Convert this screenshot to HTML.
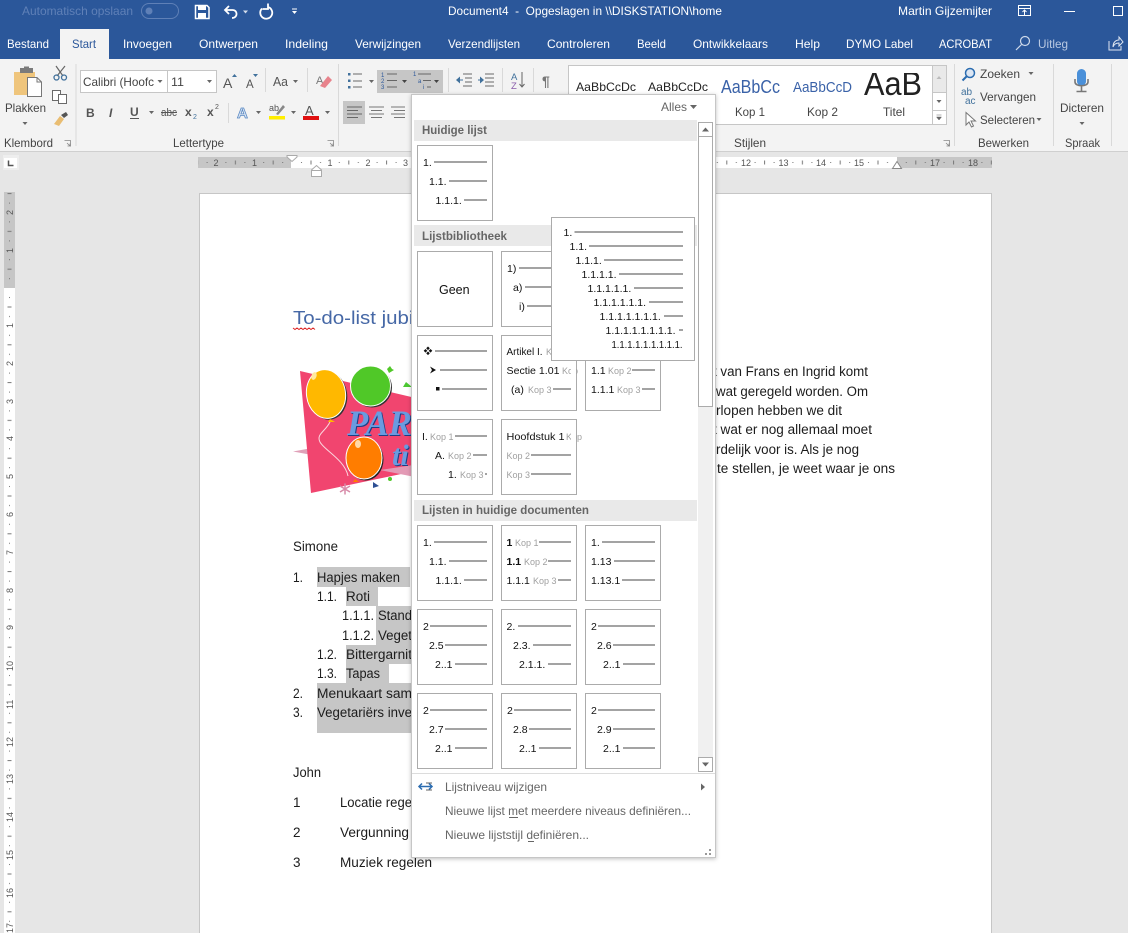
<!DOCTYPE html>
<html lang="nl"><head><meta charset="utf-8"><title>Document4</title>
<style>
html,body{margin:0;padding:0;background:#e6e6e6;overflow:hidden}
svg{display:block}
text{font-family:"Liberation Sans",sans-serif;white-space:pre}
text.sf{font-family:"Liberation Serif",serif;font-style:italic;font-weight:bold}
.tab{font-size:12px;fill:#fff}
.rb{font-size:12px;fill:#444}
.d{font-size:13.5px;fill:#1c1c1c}
.n{font-size:10.5px;fill:#111}
.k{font-size:9px;fill:#a0a0a0}
.rn{font-size:9px;fill:#555}
.ln{stroke:#a3a3a3;stroke-width:2;fill:none}
.th{fill:#fff;stroke:#ababab;stroke-width:1}
.hd{font-size:12px;font-weight:bold;fill:#666}
.m{font-size:12px;fill:#666}
.ic{fill:none;stroke:#6a6a6a;stroke-width:1}
.ar{fill:#666}
</style></head><body>
<svg xmlns="http://www.w3.org/2000/svg" width="1128" height="933" viewBox="0 0 1128 933">
<defs>
<pattern id="hr" x="292" y="157" width="37.8" height="11" patternUnits="userSpaceOnUse">
<rect x="9" y="5" width="1" height="1" fill="#777"/><rect x="18.5" y="3.5" width="1" height="4" fill="#777"/><rect x="28" y="5" width="1" height="1" fill="#777"/>
</pattern>
<pattern id="vr" x="4" y="288" width="11" height="37.8" patternUnits="userSpaceOnUse">
<rect x="5" y="9" width="1" height="1" fill="#777"/><rect x="3.5" y="18.5" width="4" height="1" fill="#777"/><rect x="5" y="28" width="1" height="1" fill="#777"/>
</pattern>
<filter id="sh" x="-5%" y="-5%" width="110%" height="110%"><feDropShadow dx="0" dy="1" stdDeviation="2" flood-color="#000" flood-opacity=".25"/></filter>
</defs>

<!-- background -->
<rect width="1128" height="933" fill="#e6e6e6"/>
<rect width="1128" height="59" fill="#2b579a"/>
<rect y="59" width="1128" height="92" fill="#f3f3f3"/>
<rect y="151" width="1128" height="1" fill="#cfcfcf"/>

<!-- title bar -->
<text x="22" y="15" font-size="12" fill="#5f80b7" textLength="111" lengthAdjust="spacingAndGlyphs">Automatisch opslaan</text>
<rect x="141.500" y="3.500" width="37" height="15" rx="7.500" fill="none" stroke="#5f80b7"/>
<circle cx="149" cy="11" r="3.500" fill="#5f80b7"/>
<path d="M195.500 5.500H207L209 7.500V18.500H195.500Z" fill="none" stroke="#fff" stroke-width="1.500"/>
<rect x="198" y="6" width="8" height="4" fill="#fff"/><rect x="198" y="13" width="8" height="5" fill="#fff"/>
<path d="M229 6L225 10L229 14M225.500 10H232.500C238 10 238 18 232 18" fill="none" stroke="#fff" stroke-width="1.800"/>
<path d="M243 10.500h5l-2.500 3z" fill="#fff" opacity=".8"/>
<path d="M262 8.500A6 6 0 1 0 268 7M268 3.500V9H262.500" fill="none" stroke="#fff" stroke-width="1.800"/>
<path d="M292 9h5" stroke="#fff"/><path d="M292 11h5l-2.500 3z" fill="#fff"/>
<text x="448" y="15" font-size="12" fill="#fff" textLength="274" lengthAdjust="spacingAndGlyphs">Document4  -  Opgeslagen in \\DISKSTATION\home</text>
<text x="898" y="15" font-size="12" fill="#fff" textLength="94" lengthAdjust="spacingAndGlyphs">Martin Gijzemijter</text>
<rect x="1018.500" y="5.500" width="12" height="10" fill="none" stroke="#fff"/><path d="M1018 8.500h13M1024.500 15v-5M1022.500 12l2-2 2 2" fill="none" stroke="#fff"/>
<rect x="1064" y="11" width="11" height="1" fill="#fff"/>
<rect x="1113.500" y="6.500" width="9" height="9" fill="none" stroke="#fff"/>

<!-- tabs -->
<rect x="60" y="29" width="49" height="30" fill="#f3f3f3"/>
<text class="tab" x="7" y="48" textLength="42" lengthAdjust="spacingAndGlyphs">Bestand</text>
<text class="tab" x="72" y="48" style="fill:#2b579a" textLength="24" lengthAdjust="spacingAndGlyphs">Start</text>
<text class="tab" x="123" y="48" textLength="49" lengthAdjust="spacingAndGlyphs">Invoegen</text>
<text class="tab" x="199" y="48" textLength="59" lengthAdjust="spacingAndGlyphs">Ontwerpen</text>
<text class="tab" x="285" y="48" textLength="43" lengthAdjust="spacingAndGlyphs">Indeling</text>
<text class="tab" x="355" y="48" textLength="66" lengthAdjust="spacingAndGlyphs">Verwijzingen</text>
<text class="tab" x="448" y="48" textLength="72" lengthAdjust="spacingAndGlyphs">Verzendlijsten</text>
<text class="tab" x="547" y="48" textLength="63" lengthAdjust="spacingAndGlyphs">Controleren</text>
<text class="tab" x="637" y="48" textLength="29" lengthAdjust="spacingAndGlyphs">Beeld</text>
<text class="tab" x="693" y="48" textLength="75" lengthAdjust="spacingAndGlyphs">Ontwikkelaars</text>
<text class="tab" x="795" y="48" textLength="25" lengthAdjust="spacingAndGlyphs">Help</text>
<text class="tab" x="846" y="48" textLength="67" lengthAdjust="spacingAndGlyphs">DYMO Label</text>
<text class="tab" x="939" y="48" textLength="53" lengthAdjust="spacingAndGlyphs">ACROBAT</text>
<circle cx="1025" cy="41" r="4.500" fill="none" stroke="#cdd9ea" stroke-width="1.200"/><path d="M1021.500 44.500L1016 50" stroke="#cdd9ea" stroke-width="1.200"/>
<text class="tab" x="1038" y="48" style="fill:#b9c9e2" textLength="30" lengthAdjust="spacingAndGlyphs">Uitleg</text>
<path d="M1109 41v9h12v-4M1113 47c0-5 3-7 6-7v-3l4 5-4 4v-3c-3 0-5 1-6 4z" fill="none" stroke="#dfe6f1"/>

<!-- clipboard group -->
<rect x="14" y="72" width="21" height="23" fill="#efc57c"/>
<rect x="20" y="68" width="13" height="5" fill="#7b7b7b"/><rect x="24" y="66.500" width="5" height="3" fill="#7b7b7b"/>
<path d="M27.500 77.500H37L41.500 82V96.500H27.500Z" fill="#fff" stroke="#777"/><path d="M37 77.500V82H41.500" fill="none" stroke="#777"/>
<text class="rb" x="5" y="112" textLength="41" lengthAdjust="spacingAndGlyphs">Plakken</text>
<path d="M22.500 122h5l-2.500 3z" class="ar"/>
<path d="M56 66L63 76M65 66L57 76" stroke="#666" stroke-width="1.200"/>
<circle cx="56.500" cy="77.500" r="2.500" fill="none" stroke="#41719c" stroke-width="1.300"/><circle cx="64" cy="77.500" r="2.500" fill="none" stroke="#41719c" stroke-width="1.300"/>
<rect x="52.500" y="90.500" width="8" height="10" fill="#fff" stroke="#6a6a6a"/><rect x="58.500" y="94.500" width="8" height="9" fill="#fff" stroke="#6a6a6a"/>
<path d="M54 124L60 116L64 119L59 126Z" fill="#e9bd72"/><path d="M61 115L66 112L68 115L64 118Z" fill="#555"/>
<text class="rb" x="4" y="147" textLength="49" lengthAdjust="spacingAndGlyphs">Klembord</text>
<path d="M64.500 140.500h6v6M67 143l3 3M67.500 146h2.500v-2.500" fill="none" stroke="#888" stroke-width=".8"/>
<rect x="75.500" y="64" width="1" height="82" fill="#d9d9d9"/>

<!-- font group -->
<rect x="80.500" y="70.500" width="87" height="22" fill="#fff" stroke="#c6c6c6"/>
<rect x="167.500" y="70.500" width="49" height="22" fill="#fff" stroke="#c6c6c6"/>
<text x="83" y="86" font-size="12" fill="#444" textLength="71" lengthAdjust="spacingAndGlyphs">Calibri (Hoofc</text>
<path d="M157.500 80h5l-2.500 3z" class="ar"/>
<text x="171" y="86" font-size="12" fill="#444" textLength="13" lengthAdjust="spacingAndGlyphs">11</text>
<path d="M207 80h5l-2.500 3z" class="ar"/>
<text x="223" y="88" font-size="14" fill="#555">A</text><path d="M232 77l2.500-3 2.500 3z" fill="#41719c"/>
<text x="246" y="88" font-size="11.500" fill="#555">A</text><path d="M253 74h5l-2.500 3z" fill="#41719c"/>
<rect x="265" y="68" width="1" height="24" fill="#d9d9d9"/>
<text x="273" y="86" font-size="13" fill="#555" textLength="15" lengthAdjust="spacingAndGlyphs">Aa</text><path d="M293 80h5l-2.500 3z" class="ar"/>
<rect x="307" y="68" width="1" height="24" fill="#d9d9d9"/>
<text x="316" y="84" font-size="11" fill="#777">A</text><path d="M320 86L328 76L332 80L325 88Z" fill="#e8838c"/>
<text x="86" y="117" font-size="12" font-weight="bold" fill="#555">B</text>
<text x="109" y="117" font-size="12" font-style="italic" fill="#555" font-weight="bold">I</text>
<text x="130" y="116" font-size="12" font-weight="bold" fill="#555">U</text><rect x="130" y="118" width="9" height="1" fill="#555"/>
<path d="M149 111h5l-2.500 3z" class="ar"/>
<text x="161" y="116" font-size="11" fill="#555" textLength="16" lengthAdjust="spacingAndGlyphs">abc</text><rect x="161" y="112" width="16" height="1" fill="#555"/>
<text x="185" y="116" font-size="12" font-weight="bold" fill="#555">x</text><text x="193" y="119" font-size="7" fill="#41719c">2</text>
<text x="207" y="116" font-size="12" font-weight="bold" fill="#555">x</text><text x="215" y="109" font-size="7" fill="#555">2</text>
<rect x="228" y="103" width="1" height="20" fill="#d9d9d9"/>
<text x="237" y="118" font-size="15" font-weight="bold" fill="#dce6f3" stroke="#5b8ac4" stroke-width=".8">A</text>
<path d="M256 111h5l-2.500 3z" class="ar"/>
<text x="269" y="111" font-size="9" fill="#555">ab</text><path d="M276 114L283 105L285 107L278 115Z" fill="#888"/>
<rect x="269" y="116" width="16" height="3.500" fill="#ffee00"/>
<path d="M291 111h5l-2.500 3z" class="ar"/>
<text x="305" y="115" font-size="13" fill="#555">A</text><rect x="303" y="116" width="16" height="4" fill="#e01010"/>
<path d="M325 111h5l-2.500 3z" class="ar"/>
<text class="rb" x="173" y="147" textLength="51" lengthAdjust="spacingAndGlyphs">Lettertype</text>
<path d="M327.500 140.500h6v6M330 143l3 3M330.500 146h2.500v-2.500" fill="none" stroke="#888" stroke-width=".8"/>
<rect x="338" y="64" width="1" height="82" fill="#d9d9d9"/>

<!-- paragraph group -->
<rect x="377" y="70" width="66" height="23" fill="#c6c6c6"/>
<path d="M353 74h9M353 81h9M353 87h9" stroke="#6a6a6a"/>
<rect x="348" y="73" width="2.500" height="2.500" fill="#41719c"/><rect x="348" y="79.500" width="2.500" height="2.500" fill="#41719c"/><rect x="348" y="86" width="2.500" height="2.500" fill="#41719c"/>
<path d="M369 80h5l-2.500 3z" class="ar"/>
<text x="381" y="77" font-size="6" fill="#2b579a">1</text><text x="381" y="83" font-size="6" fill="#2b579a">2</text><text x="381" y="89" font-size="6" fill="#2b579a">3</text>
<path d="M387 74h10M387 80.500h10M387 87h10" stroke="#666"/>
<path d="M402 80h5l-2.500 3z" fill="#444"/>
<text x="413" y="76" font-size="6" fill="#2b579a">1</text><text x="418" y="83" font-size="6" fill="#2b579a">a</text><text x="423" y="89" font-size="6" fill="#2b579a">i</text>
<path d="M418 74h13M423 80.500h8M427 87h4" stroke="#666"/>
<path d="M434 80h5l-2.500 3z" fill="#444"/>
<rect x="448" y="68" width="1" height="24" fill="#d9d9d9"/>
<path d="M463 74h9M465 78h7M465 82h7M463 86h9" stroke="#6a6a6a"/><path d="M456 80l4-3.500v7z" fill="#41719c"/><path d="M458 80h5" stroke="#41719c"/>
<path d="M485 74h9M485 78h9M485 82h9M485 86h9" stroke="#6a6a6a"/><path d="M484 80l-4-3.500v7z" fill="#41719c"/><path d="M478 80h4" stroke="#41719c"/>
<rect x="502" y="68" width="1" height="24" fill="#d9d9d9"/>
<text x="511" y="80" font-size="9.500" fill="#41719c">A</text><text x="511" y="89" font-size="9.500" fill="#8a5cab">Z</text>
<path d="M522 72V87M519.500 84l2.500 3 2.500-3" fill="none" stroke="#666"/>
<rect x="533" y="68" width="1" height="24" fill="#d9d9d9"/>
<text x="542" y="86" font-size="14" fill="#777" font-weight="bold">¶</text>
<rect x="343" y="101" width="22" height="23" fill="#c6c6c6"/>
<path d="M347 107h15M347 110.500h11M347 114h15M347 117.500h11" stroke="#666"/>
<path d="M369 107h15M371 110.500h11M369 114h15M371 117.500h11" stroke="#777"/>
<path d="M391 107h14M394 110.500h11M391 114h14M394 117.500h11" stroke="#777"/>

<!-- styles gallery -->
<rect x="568.500" y="65.500" width="378" height="59" fill="#fff" stroke="#c6c6c6"/>
<rect x="932" y="66" width="14" height="26" fill="#e9e9e9"/><path d="M932.500 66V124M932 92.500H946M932 110.500H946" stroke="#c6c6c6"/>
<path d="M936.500 79h5l-2.500-3z" fill="#bbb"/><path d="M936.500 100h5l-2.500 3z" class="ar"/><path d="M936.500 115h5M936.500 117h5l-2.500 3z" fill="#666" stroke="#666" stroke-width=".5"/>
<text x="576" y="91" font-size="12" fill="#222" textLength="60" lengthAdjust="spacingAndGlyphs">AaBbCcDc</text>
<text x="648" y="91" font-size="12" fill="#222" textLength="60" lengthAdjust="spacingAndGlyphs">AaBbCcDc</text>
<text x="721" y="93" font-size="18" fill="#3a62a8" textLength="59" lengthAdjust="spacingAndGlyphs">AaBbCc</text>
<text x="793" y="92" font-size="15" fill="#3a62a8" textLength="59" lengthAdjust="spacingAndGlyphs">AaBbCcD</text>
<svg x="860" y="73" width="68" height="27"><text x="4" y="22" font-size="33" fill="#222" textLength="58" lengthAdjust="spacingAndGlyphs">AaB</text></svg>
<text class="rb" x="735" y="116" textLength="30" lengthAdjust="spacingAndGlyphs">Kop 1</text>
<text class="rb" x="807" y="116" textLength="31" lengthAdjust="spacingAndGlyphs">Kop 2</text>
<text class="rb" x="883" y="116" textLength="22" lengthAdjust="spacingAndGlyphs">Titel</text>
<text class="rb" x="734" y="147" textLength="32" lengthAdjust="spacingAndGlyphs">Stijlen</text>
<path d="M943.500 140.500h6v6M946 143l3 3M946.500 146h2.500v-2.500" fill="none" stroke="#888" stroke-width=".8"/>
<rect x="954" y="64" width="1" height="82" fill="#d9d9d9"/>

<!-- editing -->
<circle cx="970" cy="73" r="4.500" fill="#dce6f3" stroke="#2b6cb0" stroke-width="1.500"/><path d="M966.500 76.500L962.500 80.500" stroke="#2b6cb0" stroke-width="2"/>
<text class="rb" x="980" y="78" textLength="40" lengthAdjust="spacingAndGlyphs">Zoeken</text>
<path d="M1028.500 72h5l-2.500 3z" class="ar"/>
<text x="961" y="95" font-size="10" fill="#41719c">ab</text><text x="965" y="104" font-size="10" fill="#41719c">ac</text>
<text class="rb" x="980" y="101" textLength="56" lengthAdjust="spacingAndGlyphs">Vervangen</text>
<path d="M966 112.500V125L969 122L971.500 127L973.500 126L971 121H975.500Z" fill="#fff" stroke="#777"/>
<text class="rb" x="980" y="124" textLength="55" lengthAdjust="spacingAndGlyphs">Selecteren</text>
<path d="M1036.500 118h5l-2.500 3z" class="ar"/>
<text class="rb" x="978" y="147" textLength="51" lengthAdjust="spacingAndGlyphs">Bewerken</text>
<rect x="1053" y="64" width="1" height="82" fill="#d9d9d9"/>

<!-- dictate -->
<rect x="1077" y="69" width="9" height="17" rx="4.500" fill="#4a90d9"/>
<path d="M1075 79v3c0 5 13 5 13 0v-3M1081.500 86v5M1076.500 91.500h10" fill="none" stroke="#777" stroke-width="1.600"/>
<text class="rb" x="1060" y="112" textLength="44" lengthAdjust="spacingAndGlyphs">Dicteren</text>
<path d="M1079.500 122h5l-2.500 3z" class="ar"/>
<text class="rb" x="1065" y="147" textLength="35" lengthAdjust="spacingAndGlyphs">Spraak</text>
<rect x="1111" y="64" width="1" height="82" fill="#d9d9d9"/>

<!-- horizontal ruler -->
<rect x="3" y="155" width="16" height="15" fill="#eeeeee"/><rect x="4" y="158" width="13" height="10" fill="#fff"/>
<path d="M8.500 160.500v5h5" fill="none" stroke="#555" stroke-width="1.500"/>
<rect x="198" y="157" width="93" height="11" fill="#c6c6c6"/>
<rect x="291" y="157" width="606" height="11" fill="#fff"/>
<rect x="897" y="157" width="95" height="11" fill="#c6c6c6"/>
<rect x="198" y="157" width="794" height="11" fill="url(#hr)"/>
<text class="rn" x="213.500" y="166">2</text><text class="rn" x="252" y="166">1</text>
<text class="rn" x="327.500" y="166">1</text><text class="rn" x="365.500" y="166">2</text><text class="rn" x="403" y="166">3</text>
<text class="rn" x="741" y="166">12</text><text class="rn" x="778.500" y="166">13</text><text class="rn" x="816" y="166">14</text><text class="rn" x="854" y="166">15</text><text class="rn" x="930" y="166">17</text><text class="rn" x="968" y="166">18</text>
<path d="M287 155.500H297V157L292 161.500L287 157Z" fill="#fff" stroke="#aaa"/>
<path d="M311.500 176.500V170L316.500 165.500L321.500 170V176.500Z" fill="#fff" stroke="#aaa"/><path d="M311.500 170.500H321.500" stroke="#aaa"/>
<path d="M892.500 168.500L897 161.500L901.500 168.500Z" fill="#fff" stroke="#888"/>

<!-- vertical ruler -->
<rect x="4" y="192" width="11" height="96" fill="#c6c6c6"/>
<rect x="4" y="288" width="11" height="645" fill="#fff"/>
<rect x="4" y="192" width="11" height="741" fill="url(#vr)"/>
<g class="rn">
<text class="rn" transform="translate(13,215) rotate(-90)">2</text><text class="rn" transform="translate(13,253) rotate(-90)">1</text>
<text class="rn" transform="translate(13,328) rotate(-90)">1</text><text class="rn" transform="translate(13,366) rotate(-90)">2</text>
<text class="rn" transform="translate(13,404) rotate(-90)">3</text><text class="rn" transform="translate(13,441) rotate(-90)">4</text>
<text class="rn" transform="translate(13,479) rotate(-90)">5</text><text class="rn" transform="translate(13,517) rotate(-90)">6</text>
<text class="rn" transform="translate(13,555) rotate(-90)">7</text><text class="rn" transform="translate(13,593) rotate(-90)">8</text>
<text class="rn" transform="translate(13,630) rotate(-90)">9</text><text class="rn" transform="translate(13,671) rotate(-90)">10</text>
<text class="rn" transform="translate(13,709) rotate(-90)">11</text><text class="rn" transform="translate(13,747) rotate(-90)">12</text>
<text class="rn" transform="translate(13,784) rotate(-90)">13</text><text class="rn" transform="translate(13,822) rotate(-90)">14</text>
<text class="rn" transform="translate(13,860) rotate(-90)">15</text><text class="rn" transform="translate(13,898) rotate(-90)">16</text>
<text class="rn" transform="translate(13,933) rotate(-90)">17</text>
</g>

<!-- page -->
<rect x="199.500" y="193.500" width="792" height="760" fill="#fff" stroke="#c6c6c6"/>
<text x="293" y="324" font-size="18.500" fill="#4668a6" textLength="125" lengthAdjust="spacingAndGlyphs">To-do-list jubil</text>
<path d="M293 328l2 1.500 2-1.500 2 1.500 2-1.500 2 1.500 2-1.500 2 1.500 2-1.500 2 1.500 2-1.500 2 1.500" fill="none" stroke="#d22" stroke-width="1"/>

<!-- party art -->
<path d="M293 451.500L312 448V455Z" fill="#e0a0b8"/>
<path d="M300 371L420 399V470L311 493Z" fill="#f1456f"/>
<path d="M380 470L420 464V478Z" fill="#e39ab5"/>
<path d="M406 382l6 5h-9z" fill="#4cc832"/>
<ellipse cx="327.500" cy="395.500" rx="19.500" ry="24.500" fill="#333" transform="rotate(-8 326 394)"/>
<ellipse cx="326" cy="394" rx="19.500" ry="24.500" fill="#ffb800" stroke="#fff" stroke-width="1" transform="rotate(-8 326 394)"/>
<path d="M330 419l5 3h-7z" fill="#ffb800"/>
<ellipse cx="314" cy="376" rx="2.500" ry="4" fill="#ffe9a0" transform="rotate(20 314 376)"/>
<circle cx="372" cy="387.500" r="20" fill="#333"/>
<ellipse cx="370.500" cy="386" rx="20" ry="20" fill="#50c828" stroke="#fff"/>
<path d="M387 369l3-3 2 3 2 1-5 3z" fill="#50c828"/>
<text class="sf" x="347" y="435" font-size="36" fill="#1d3f86" textLength="86" lengthAdjust="spacingAndGlyphs" transform="translate(1,1)">PART</text>
<text class="sf" x="347" y="435" font-size="36" fill="#6a9be0" textLength="86" lengthAdjust="spacingAndGlyphs">PART</text>
<text class="sf" x="392" y="465" font-size="30" fill="#1d3f86" transform="translate(1,1)">ti</text>
<text class="sf" x="392" y="465" font-size="30" fill="#6a9be0">ti</text>
<path d="M330 422C325 432 316 434 320 442C324 450 345 460 348 476" fill="none" stroke="#fbd6de" stroke-width="1"/>
<ellipse cx="365.500" cy="459.500" rx="18" ry="21" fill="#222"/>
<ellipse cx="364" cy="458" rx="18" ry="21" fill="#ff7d00" stroke="#fff" stroke-width="1"/>
<path d="M355 479l4 3h-6z" fill="#ff7d00"/>
<ellipse cx="358" cy="444" rx="3" ry="4" fill="#ffd9a8"/>
<path d="M345 483.500v11M340 486l10 6M350 486l-10 6" stroke="#d78aa8" stroke-width="1.500"/>
<path d="M373 482l6 4-6 2z" fill="#2d4f93"/>
<circle cx="390" cy="479" r="2" fill="#50c828"/>

<!-- body text right -->
<text class="d" x="713" y="376" textLength="155" lengthAdjust="spacingAndGlyphs">t van Frans en Ingrid komt</text>
<text class="d" x="716" y="396" textLength="152" lengthAdjust="spacingAndGlyphs">wat geregeld worden. Om</text>
<text class="d" x="716" y="415" textLength="126" lengthAdjust="spacingAndGlyphs">rlopen hebben we dit</text>
<text class="d" x="713" y="434" textLength="159" lengthAdjust="spacingAndGlyphs">t wat er nog allemaal moet</text>
<text class="d" x="716" y="454" textLength="143" lengthAdjust="spacingAndGlyphs">rdelijk voor is. Als je nog</text>
<text class="d" x="717" y="473" textLength="178" lengthAdjust="spacingAndGlyphs">te stellen, je weet waar je ons</text>

<!-- body text left -->
<text class="d" x="293" y="551" textLength="45" lengthAdjust="spacingAndGlyphs">Simone</text>
<rect x="317" y="567" width="93" height="20" fill="#c6c6c6"/>
<rect x="346" y="587" width="32" height="19" fill="#c6c6c6"/>
<rect x="376" y="606" width="36" height="39" fill="#c6c6c6"/>
<rect x="346" y="645" width="66" height="19" fill="#c6c6c6"/>
<rect x="346" y="664" width="43" height="19" fill="#c6c6c6"/>
<rect x="317" y="683" width="95" height="50" fill="#c6c6c6"/>
<text class="d" x="293" y="582" textLength="10" lengthAdjust="spacingAndGlyphs">1.</text>
<text class="d" x="317" y="582" textLength="83" lengthAdjust="spacingAndGlyphs">Hapjes maken</text>
<text class="d" x="317" y="601" textLength="20" lengthAdjust="spacingAndGlyphs">1.1.</text>
<text class="d" x="346" y="601" textLength="24" lengthAdjust="spacingAndGlyphs">Roti</text>
<text class="d" x="342" y="620" textLength="32" lengthAdjust="spacingAndGlyphs">1.1.1.</text>
<text class="d" x="378" y="620" textLength="34" lengthAdjust="spacingAndGlyphs">Stand</text>
<text class="d" x="342" y="640" textLength="32" lengthAdjust="spacingAndGlyphs">1.1.2.</text>
<text class="d" x="378" y="640" textLength="34" lengthAdjust="spacingAndGlyphs">Veget</text>
<text class="d" x="317" y="659" textLength="20" lengthAdjust="spacingAndGlyphs">1.2.</text>
<text class="d" x="346" y="659" textLength="66" lengthAdjust="spacingAndGlyphs">Bittergarnit</text>
<text class="d" x="317" y="678" textLength="20" lengthAdjust="spacingAndGlyphs">1.3.</text>
<text class="d" x="346" y="678" textLength="34" lengthAdjust="spacingAndGlyphs">Tapas</text>
<text class="d" x="293" y="698" textLength="10" lengthAdjust="spacingAndGlyphs">2.</text>
<text class="d" x="317" y="698" textLength="95" lengthAdjust="spacingAndGlyphs">Menukaart sam</text>
<text class="d" x="293" y="717" textLength="10" lengthAdjust="spacingAndGlyphs">3.</text>
<text class="d" x="317" y="717" textLength="95" lengthAdjust="spacingAndGlyphs">Vegetariërs inve</text>
<text class="d" x="293" y="777" textLength="28" lengthAdjust="spacingAndGlyphs">John</text>
<text class="d" x="293" y="807">1</text><text class="d" x="340" y="807" textLength="72" lengthAdjust="spacingAndGlyphs">Locatie rege</text>
<text class="d" x="293" y="837">2</text><text class="d" x="340" y="837" textLength="69" lengthAdjust="spacingAndGlyphs">Vergunning</text>
<text class="d" x="293" y="867">3</text><text class="d" x="340" y="867" textLength="92" lengthAdjust="spacingAndGlyphs">Muziek regelen</text>

<!-- dropdown -->
<rect x="411.500" y="94.500" width="304" height="763" fill="#fff" stroke="#c6c6c6" filter="url(#sh)"/>
<text class="m" x="661" y="111" textLength="26" lengthAdjust="spacingAndGlyphs">Alles</text>
<path d="M690 105h7l-3.500 4z" class="ar"/>
<rect x="414" y="120" width="283" height="21" fill="#e9e9e9"/>
<text class="hd" x="422" y="134" textLength="65" lengthAdjust="spacingAndGlyphs">Huidige lijst</text>
<rect x="414" y="225" width="283" height="21" fill="#e9e9e9"/>
<text class="hd" x="422" y="240" textLength="85" lengthAdjust="spacingAndGlyphs">Lijstbibliotheek</text>
<rect x="414" y="500" width="283" height="21" fill="#e9e9e9"/>
<text class="hd" x="422" y="514" textLength="167" lengthAdjust="spacingAndGlyphs">Lijsten in huidige documenten</text>

<!-- scrollbar -->
<rect x="698" y="122" width="15" height="649" fill="#f0f0f0"/>
<rect x="698.500" y="122.500" width="14" height="14" fill="#fff" stroke="#ababab"/>
<path d="M702 131.500h7l-3.500-4z" class="ar"/>
<rect x="698.500" y="136.500" width="14" height="270" fill="#fff" stroke="#ababab"/>
<rect x="698.500" y="757.500" width="14" height="14" fill="#fff" stroke="#ababab"/>
<path d="M702 762.500h7l-3.500 4z" class="ar"/>

<!-- thumbnails -->
<g transform="translate(417,145)"><rect class="th" x=".5" y=".5" width="75" height="75"/>
<text class="n" x="6" y="21">1.</text><path class="ln" d="M17 17H70"/><text class="n" x="12" y="40">1.1.</text><path class="ln" d="M32 36H70"/><text class="n" x="18.500" y="59">1.1.1.</text><path class="ln" d="M47 55H70"/></g>

<g transform="translate(417,251)"><rect class="th" x=".5" y=".5" width="75" height="75"/>
<text x="22" y="43" font-size="12.500" fill="#111">Geen</text></g>

<g transform="translate(501,251)"><rect class="th" x=".5" y=".5" width="75" height="75"/>
<text class="n" x="6" y="21">1)</text><path class="ln" d="M18 17H70"/><text class="n" x="12" y="40">a)</text><path class="ln" d="M24 36H70"/><text class="n" x="18" y="59">i)</text><path class="ln" d="M26 55H70"/></g>

<g transform="translate(417,335)"><rect class="th" x=".5" y=".5" width="75" height="75"/>
<path d="M11 11.500l1.800 1.800-1.800 1.800-1.800-1.800zM11 16.500l1.800 1.800-1.800 1.800-1.800-1.800zM8.500 14l1.800 1.800-1.800 1.800-1.800-1.800zM13.500 14l1.800 1.800-1.800 1.800-1.800-1.800z" fill="#111"/>
<path class="ln" d="M18 16H70"/>
<path d="M13 31.500L19 35L13 38.500L15 35Z" fill="#111"/><path class="ln" d="M23 35H70"/>
<rect x="19" y="52" width="3.500" height="3.500" fill="#111"/><path class="ln" d="M25 54H70"/></g>

<g transform="translate(501,335)"><rect class="th" x=".5" y=".5" width="75" height="75"/>
<text class="n" x="5.500" y="20" textLength="36" lengthAdjust="spacingAndGlyphs">Artikel I.</text><text class="k" x="45" y="20">Kop</text>
<text class="n" x="5.500" y="39" textLength="53" lengthAdjust="spacingAndGlyphs">Sectie 1.01</text><text class="k" x="61" y="39">Kop</text>
<text class="n" x="10" y="58">(a)</text><text class="k" x="27" y="58">Kop 3</text><path class="ln" d="M52 54H70"/>
<rect x="70" y="10" width="5" height="32" fill="#fff"/></g>

<g transform="translate(585,335)"><rect class="th" x=".5" y=".5" width="75" height="75"/>
<text class="n" x="6" y="39">1.1</text><text class="k" x="23" y="39">Kop 2</text><path class="ln" d="M47 35H70"/>
<text class="n" x="6" y="58">1.1.1</text><text class="k" x="32" y="58">Kop 3</text><path class="ln" d="M57 54H70"/></g>

<g transform="translate(417,419)"><rect class="th" x=".5" y=".5" width="75" height="75"/>
<text class="n" x="5" y="21">I.</text><text class="k" x="13" y="21">Kop 1</text><path class="ln" d="M38 17H70"/>
<text class="n" x="18" y="40">A.</text><text class="k" x="31" y="40">Kop 2</text><path class="ln" d="M56 36H70"/>
<text class="n" x="31" y="59">1.</text><text class="k" x="43" y="59">Kop 3</text><path class="ln" d="M68 55H70"/></g>

<g transform="translate(501,419)"><rect class="th" x=".5" y=".5" width="75" height="75"/>
<text class="n" x="5.500" y="21" textLength="58" lengthAdjust="spacingAndGlyphs">Hoofdstuk 1</text><text class="k" x="65" y="21">Kop</text>
<text class="k" x="5.500" y="40">Kop 2</text><path class="ln" d="M30 36H70"/>
<text class="k" x="5.500" y="59">Kop 3</text><path class="ln" d="M30 55H70"/>
<rect x="70" y="10" width="5" height="14" fill="#fff"/></g>

<g transform="translate(417,525)"><rect class="th" x=".5" y=".5" width="75" height="75"/>
<text class="n" x="6" y="21">1.</text><path class="ln" d="M17 17H70"/><text class="n" x="12" y="40">1.1.</text><path class="ln" d="M32 36H70"/><text class="n" x="18.500" y="59">1.1.1.</text><path class="ln" d="M47 55H70"/></g>

<g transform="translate(501,525)"><rect class="th" x=".5" y=".5" width="75" height="75"/>
<text class="n" x="5.500" y="21" font-weight="bold">1</text><text class="k" x="14" y="21">Kop 1</text><path class="ln" d="M38 17H70"/>
<text class="n" x="5.500" y="40" font-weight="bold">1.1</text><text class="k" x="23" y="40">Kop 2</text><path class="ln" d="M47 36H70"/>
<text class="n" x="5.500" y="59">1.1.1</text><text class="k" x="32" y="59">Kop 3</text><path class="ln" d="M57 55H70"/></g>

<g transform="translate(585,525)"><rect class="th" x=".5" y=".5" width="75" height="75"/>
<text class="n" x="6" y="21">1.</text><path class="ln" d="M17 17H70"/><text class="n" x="6" y="40">1.13</text><path class="ln" d="M29 36H70"/><text class="n" x="6" y="59">1.13.1</text><path class="ln" d="M37 55H70"/></g>

<g transform="translate(417,609)"><rect class="th" x=".5" y=".5" width="75" height="75"/>
<text class="n" x="6" y="21">2</text><path class="ln" d="M13 17H70"/><text class="n" x="12" y="40">2.5</text><path class="ln" d="M28 36H70"/><text class="n" x="18" y="59">2..1</text><path class="ln" d="M38 55H70"/></g>

<g transform="translate(501,609)"><rect class="th" x=".5" y=".5" width="75" height="75"/>
<text class="n" x="5.500" y="21">2.</text><path class="ln" d="M17 17H70"/><text class="n" x="12" y="40">2.3.</text><path class="ln" d="M32 36H70"/><text class="n" x="18" y="59">2.1.1.</text><path class="ln" d="M47 55H70"/></g>

<g transform="translate(585,609)"><rect class="th" x=".5" y=".5" width="75" height="75"/>
<text class="n" x="6" y="21">2</text><path class="ln" d="M13 17H70"/><text class="n" x="12" y="40">2.6</text><path class="ln" d="M28 36H70"/><text class="n" x="18" y="59">2..1</text><path class="ln" d="M38 55H70"/></g>

<g transform="translate(417,693)"><rect class="th" x=".5" y=".5" width="75" height="75"/>
<text class="n" x="6" y="21">2</text><path class="ln" d="M13 17H70"/><text class="n" x="12" y="40">2.7</text><path class="ln" d="M28 36H70"/><text class="n" x="18" y="59">2..1</text><path class="ln" d="M38 55H70"/></g>

<g transform="translate(501,693)"><rect class="th" x=".5" y=".5" width="75" height="75"/>
<text class="n" x="6" y="21">2</text><path class="ln" d="M13 17H70"/><text class="n" x="12" y="40">2.8</text><path class="ln" d="M28 36H70"/><text class="n" x="18" y="59">2..1</text><path class="ln" d="M38 55H70"/></g>

<g transform="translate(585,693)"><rect class="th" x=".5" y=".5" width="75" height="75"/>
<text class="n" x="6" y="21">2</text><path class="ln" d="M13 17H70"/><text class="n" x="12" y="40">2.9</text><path class="ln" d="M28 36H70"/><text class="n" x="18" y="59">2..1</text><path class="ln" d="M38 55H70"/></g>

<!-- tooltip preview -->
<rect x="551.500" y="217.500" width="143" height="143" fill="#fff" stroke="#ababab"/>
<text class="n" x="563.500" y="236">1.</text><path class="ln" d="M574.500 232H683"/>
<text class="n" x="569.500" y="250">1.1.</text><path class="ln" d="M589 246H683"/>
<text class="n" x="575.500" y="264">1.1.1.</text><path class="ln" d="M604 260H683"/>
<text class="n" x="581.500" y="278">1.1.1.1.</text><path class="ln" d="M619 274H683"/>
<text class="n" x="587.500" y="292">1.1.1.1.1.</text><path class="ln" d="M634 288H683"/>
<text class="n" x="593.500" y="306">1.1.1.1.1.1.</text><path class="ln" d="M649 302H683"/>
<text class="n" x="599.500" y="320">1.1.1.1.1.1.1.</text><path class="ln" d="M664 316H683"/>
<text class="n" x="605.500" y="334">1.1.1.1.1.1.1.1.</text><path class="ln" d="M679 330H683"/>
<text class="n" x="611.500" y="348" textLength="71" lengthAdjust="spacingAndGlyphs">1.1.1.1.1.1.1.1.1.</text>

<!-- menu footer -->
<rect x="412" y="773" width="303" height="1" fill="#dcdcdc"/>
<path d="M426 783h6M426 790h6" stroke="#666"/>
<path d="M419 786.500h13" stroke="#2b6cb0" stroke-width="1.500"/><path d="M422 783.500l-3 3 3 3M429 783.500l3 3-3 3" fill="none" stroke="#2b6cb0" stroke-width="1.500"/>
<text class="m" x="445" y="791" textLength="102" lengthAdjust="spacingAndGlyphs">Lijstniveau wijzigen</text>
<path d="M701 783.500l4 3.500-4 3.500z" class="ar"/>
<text class="m" x="445" y="815" textLength="246" lengthAdjust="spacingAndGlyphs">Nieuwe lijst met meerdere niveaus definiëren...</text>
<rect x="509" y="817" width="9" height="1" fill="#666"/>
<text class="m" x="445" y="839" textLength="144" lengthAdjust="spacingAndGlyphs">Nieuwe lijststijl definiëren...</text>
<rect x="528" y="841" width="6" height="1" fill="#666"/>
<path d="M709 849h2v2h-2zM705 853h2v2h-2zM709 853h2v2h-2z" fill="#999"/>
</svg>
</body></html>
